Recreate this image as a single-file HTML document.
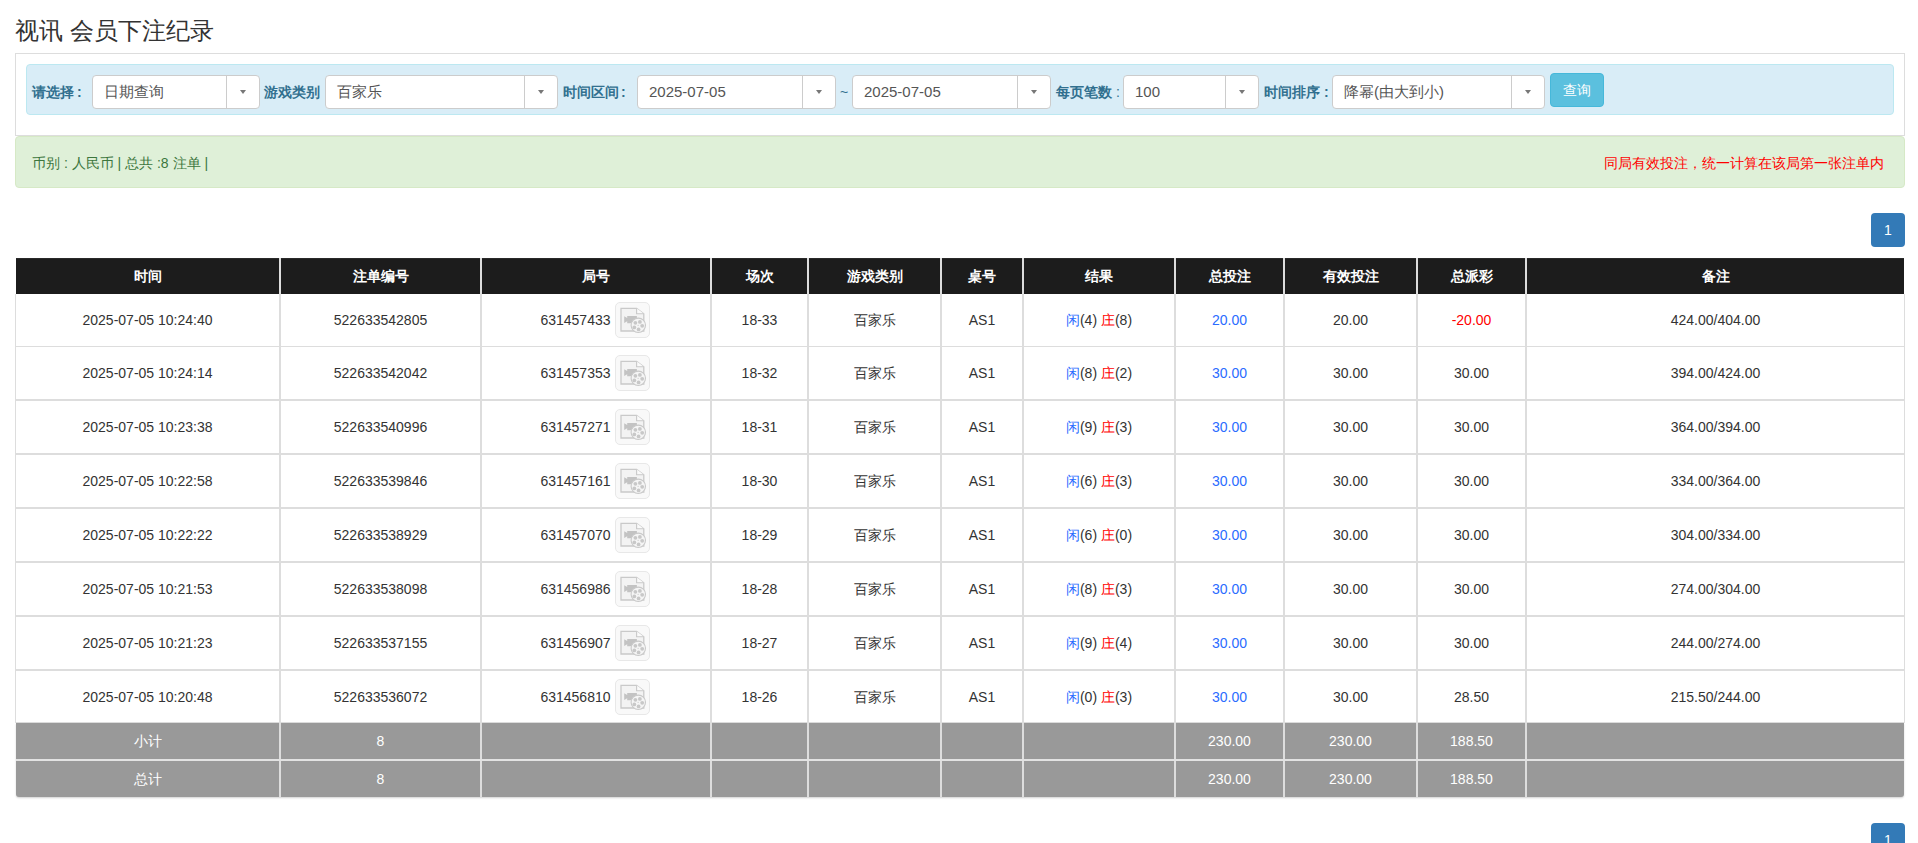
<!DOCTYPE html>
<html><head><meta charset="utf-8"><title>视讯 会员下注纪录</title>
<style>
html,body{margin:0;padding:0;background:#fff;}
body{width:1918px;height:843px;overflow:hidden;position:relative;font-family:"Liberation Sans",sans-serif;font-size:14px;color:#333;}
.a{position:absolute;white-space:nowrap;}
.title{left:15px;top:15px;font-size:24px;line-height:32px;color:#333;}
.panel{left:15px;top:53px;width:1888px;height:81px;border:1px solid #ddd;border-bottom:1px solid #ddd;}
.info{left:26px;top:64px;width:1866px;height:49px;background:#d9edf7;border:1px solid #bce8f1;border-radius:4px;}
.lbl{font-weight:bold;color:#31708f;font-size:14px;line-height:20px;top:82px;}
.sel{position:absolute;top:75px;height:32px;background:#fff;border:1px solid #ccc;border-radius:4px;}
.sel .tx{position:absolute;left:11px;top:0;line-height:32px;font-size:15px;color:#555;white-space:nowrap;}
.sel .dv{position:absolute;top:0;width:1px;height:32px;background:#ccc;}
.sel .ca{position:absolute;top:14px;width:0;height:0;border-left:3.5px solid transparent;border-right:3.5px solid transparent;border-top:4px solid #777;}
.btn{left:1550px;top:73px;width:54px;height:34px;box-sizing:border-box;border:1px solid #46b8da;background:#5bc0de;border-radius:4px;color:#fff;font-size:14px;line-height:32px;text-align:center;}
.succ{left:15px;top:136px;width:1888px;height:50px;background:#dff0d8;border:1px solid #d6e9c6;border-radius:4px;}
.gtx{left:32px;top:153px;color:#3c763d;font-size:14px;line-height:20px;}
.rtx{left:1604px;top:153px;color:#ff0000;font-size:14px;line-height:20px;}
.pg{left:1871px;width:34px;height:34px;background:#337ab7;border-radius:4px;color:#fff;font-size:14px;line-height:34px;text-align:center;}
.hd{position:absolute;background:#1c1c1c;border-top:1px solid #2a2a2a;box-sizing:border-box;}
.tb{position:absolute;box-sizing:border-box;border:1px solid #ddd;border-top:0;background:#fff;}
.hl{position:absolute;background:#ddd;}
.fbg{position:absolute;background:#999;border-radius:0 0 3px 3px;box-shadow:0 1px 2px rgba(0,0,0,.18);}
.vl{position:absolute;background:#ddd;}
.c{position:absolute;display:flex;align-items:center;justify-content:center;white-space:nowrap;font-size:14px;color:#333;}
.c.th{color:#fff;font-weight:bold;padding-top:0px;box-sizing:border-box;}
.c.ft{color:#fff;}
.jn{position:relative;top:1px;}
.c2 .ci{position:relative;left:-0.6px;}
.ci{line-height:20px;}
.bl{color:#2b6cff;}
.rd{color:#ff0000;}
.ib{display:inline-block;vertical-align:middle;width:35px;height:36px;margin-left:1px;box-sizing:border-box;border:1px solid #e8e8e8;border-radius:5px;background:#f9f9f9;position:relative;}
.ib svg{position:absolute;left:-1px;top:-1px;}
</style></head><body>
<div class="a title">视讯 会员下注纪录</div>
<div class="a panel"></div>
<div class="a info"></div>
<div class="a lbl" style="left:32px">请选择<span style="padding-left:3px">:</span></div>
<div class="sel" style="left:92px;width:166px"><span class="tx">日期查询</span><span class="dv" style="left:133px"></span><span class="ca" style="left:147px"></span></div>
<div class="a lbl" style="left:264px">游戏类别</div>
<div class="sel" style="left:325px;width:231px"><span class="tx">百家乐</span><span class="dv" style="left:198px"></span><span class="ca" style="left:212px"></span></div>
<div class="a lbl" style="left:563px">时间区间<span style="padding-left:2px">:</span></div>
<div class="sel" style="left:637px;width:197px"><span class="tx">2025-07-05</span><span class="dv" style="left:164px"></span><span class="ca" style="left:178px"></span></div>
<div class="a lbl" style="left:840px;font-weight:normal">~</div>
<div class="sel" style="left:852px;width:197px"><span class="tx">2025-07-05</span><span class="dv" style="left:164px"></span><span class="ca" style="left:178px"></span></div>
<div class="a lbl" style="left:1056px">每页笔数 <span style="font-weight:normal">:</span></div>
<div class="sel" style="left:1123px;width:134px"><span class="tx">100</span><span class="dv" style="left:101px"></span><span class="ca" style="left:115px"></span></div>
<div class="a lbl" style="left:1264px">时间排序 :</div>
<div class="sel" style="left:1332px;width:211px"><span class="tx">降幂(由大到小)</span><span class="dv" style="left:178px"></span><span class="ca" style="left:192px"></span></div>
<div class="a btn">查询</div>
<div class="a succ"></div>
<div class="a gtx">币别 : 人民币 | 总共 :8 注单 |</div>
<div class="a rtx">同局有效投注，统一计算在该局第一张注单内</div>
<div class="a pg" style="top:213px">1</div>
<div class="hd" style="left:16px;top:258px;width:1888px;height:36px"></div>
<div class="tb" style="left:15px;top:294px;width:1890px;height:429px"></div>
<div class="fbg" style="left:16px;top:723px;width:1888px;height:74px"></div>
<div class="c th" style="left:16px;top:258px;width:263px;height:36px"><span class="ci">时间</span></div>
<div class="c th" style="left:281px;top:258px;width:199px;height:36px"><span class="ci">注单编号</span></div>
<div class="c th" style="left:482px;top:258px;width:228px;height:36px"><span class="ci">局号</span></div>
<div class="c th" style="left:712px;top:258px;width:95px;height:36px"><span class="ci">场次</span></div>
<div class="c th" style="left:809px;top:258px;width:131px;height:36px"><span class="ci">游戏类别</span></div>
<div class="c th" style="left:942px;top:258px;width:80px;height:36px"><span class="ci">桌号</span></div>
<div class="c th" style="left:1024px;top:258px;width:150px;height:36px"><span class="ci">结果</span></div>
<div class="c th" style="left:1176px;top:258px;width:107px;height:36px"><span class="ci">总投注</span></div>
<div class="c th" style="left:1285px;top:258px;width:131px;height:36px"><span class="ci">有效投注</span></div>
<div class="c th" style="left:1418px;top:258px;width:107px;height:36px"><span class="ci">总派彩</span></div>
<div class="c th" style="left:1527px;top:258px;width:377px;height:36px"><span class="ci">备注</span></div>
<div class="hl" style="left:15px;top:346px;width:1890px;height:1px"></div>
<div class="hl" style="left:15px;top:399px;width:1890px;height:2px"></div>
<div class="hl" style="left:15px;top:453px;width:1890px;height:2px"></div>
<div class="hl" style="left:15px;top:507px;width:1890px;height:2px"></div>
<div class="hl" style="left:15px;top:561px;width:1890px;height:2px"></div>
<div class="hl" style="left:15px;top:615px;width:1890px;height:2px"></div>
<div class="hl" style="left:15px;top:669px;width:1890px;height:2px"></div>
<div class="vl" style="left:279px;top:258px;width:2px;height:539px"></div>
<div class="vl" style="left:480px;top:258px;width:2px;height:539px"></div>
<div class="vl" style="left:710px;top:258px;width:2px;height:539px"></div>
<div class="vl" style="left:807px;top:258px;width:2px;height:539px"></div>
<div class="vl" style="left:940px;top:258px;width:2px;height:539px"></div>
<div class="vl" style="left:1022px;top:258px;width:2px;height:539px"></div>
<div class="vl" style="left:1174px;top:258px;width:2px;height:539px"></div>
<div class="vl" style="left:1283px;top:258px;width:2px;height:539px"></div>
<div class="vl" style="left:1416px;top:258px;width:2px;height:539px"></div>
<div class="vl" style="left:1525px;top:258px;width:2px;height:539px"></div>
<div class="c " style="left:16px;top:294px;width:263px;height:52px"><span class="ci">2025-07-05 10:24:40</span></div>
<div class="c " style="left:281px;top:294px;width:199px;height:52px"><span class="ci">522633542805</span></div>
<div class="c c2" style="left:482px;top:294px;width:228px;height:52px"><span class="ci"><span class="jn">631457433</span> <span class="ib"><svg width="35" height="36" viewBox="0 0 35 36"><path d="M6 6.3H21.6L28.8 11.8V29H6Z" fill="#f3f3f3" stroke="#c9c9c9" stroke-width="1.3"/><path d="M21.6 6.3V11.8H28.8" fill="#fafafa" stroke="#c9c9c9" stroke-width="1.1"/><path d="M9.2 14.2L12.2 16V14H21.9V21.2H12.2V19.2L9.2 21Z" fill="#c3c3c3"/><circle cx="23.3" cy="23.3" r="7.2" fill="#f5f5f5" stroke="#c9c9c9" stroke-width="1.1"/><circle cx="20.4" cy="20.8" r="1.9" fill="#c8c8c8"/><circle cx="24.9" cy="19.9" r="1.9" fill="#c8c8c8"/><circle cx="27.2" cy="23.8" r="1.9" fill="#c8c8c8"/><circle cx="23.6" cy="27.4" r="1.9" fill="#c8c8c8"/><circle cx="19.3" cy="25.4" r="1.9" fill="#c8c8c8"/><circle cx="23.1" cy="23.3" r="0.6" fill="#c8c8c8"/></svg></span></span></div>
<div class="c " style="left:712px;top:294px;width:95px;height:52px"><span class="ci">18-33</span></div>
<div class="c " style="left:809px;top:294px;width:131px;height:52px"><span class="ci">百家乐</span></div>
<div class="c " style="left:942px;top:294px;width:80px;height:52px"><span class="ci">AS1</span></div>
<div class="c " style="left:1024px;top:294px;width:150px;height:52px"><span class="ci"><span class="bl">闲</span>(4) <span class="rd">庄</span>(8)</span></div>
<div class="c " style="left:1176px;top:294px;width:107px;height:52px"><span class="ci"><span class="bl">20.00</span></span></div>
<div class="c " style="left:1285px;top:294px;width:131px;height:52px"><span class="ci">20.00</span></div>
<div class="c " style="left:1418px;top:294px;width:107px;height:52px"><span class="ci"><span class="rd">-20.00</span></span></div>
<div class="c " style="left:1527px;top:294px;width:377px;height:52px"><span class="ci">424.00/404.00</span></div>
<div class="c " style="left:16px;top:347px;width:263px;height:52px"><span class="ci">2025-07-05 10:24:14</span></div>
<div class="c " style="left:281px;top:347px;width:199px;height:52px"><span class="ci">522633542042</span></div>
<div class="c c2" style="left:482px;top:347px;width:228px;height:52px"><span class="ci"><span class="jn">631457353</span> <span class="ib"><svg width="35" height="36" viewBox="0 0 35 36"><path d="M6 6.3H21.6L28.8 11.8V29H6Z" fill="#f3f3f3" stroke="#c9c9c9" stroke-width="1.3"/><path d="M21.6 6.3V11.8H28.8" fill="#fafafa" stroke="#c9c9c9" stroke-width="1.1"/><path d="M9.2 14.2L12.2 16V14H21.9V21.2H12.2V19.2L9.2 21Z" fill="#c3c3c3"/><circle cx="23.3" cy="23.3" r="7.2" fill="#f5f5f5" stroke="#c9c9c9" stroke-width="1.1"/><circle cx="20.4" cy="20.8" r="1.9" fill="#c8c8c8"/><circle cx="24.9" cy="19.9" r="1.9" fill="#c8c8c8"/><circle cx="27.2" cy="23.8" r="1.9" fill="#c8c8c8"/><circle cx="23.6" cy="27.4" r="1.9" fill="#c8c8c8"/><circle cx="19.3" cy="25.4" r="1.9" fill="#c8c8c8"/><circle cx="23.1" cy="23.3" r="0.6" fill="#c8c8c8"/></svg></span></span></div>
<div class="c " style="left:712px;top:347px;width:95px;height:52px"><span class="ci">18-32</span></div>
<div class="c " style="left:809px;top:347px;width:131px;height:52px"><span class="ci">百家乐</span></div>
<div class="c " style="left:942px;top:347px;width:80px;height:52px"><span class="ci">AS1</span></div>
<div class="c " style="left:1024px;top:347px;width:150px;height:52px"><span class="ci"><span class="bl">闲</span>(8) <span class="rd">庄</span>(2)</span></div>
<div class="c " style="left:1176px;top:347px;width:107px;height:52px"><span class="ci"><span class="bl">30.00</span></span></div>
<div class="c " style="left:1285px;top:347px;width:131px;height:52px"><span class="ci">30.00</span></div>
<div class="c " style="left:1418px;top:347px;width:107px;height:52px"><span class="ci">30.00</span></div>
<div class="c " style="left:1527px;top:347px;width:377px;height:52px"><span class="ci">394.00/424.00</span></div>
<div class="c " style="left:16px;top:401px;width:263px;height:52px"><span class="ci">2025-07-05 10:23:38</span></div>
<div class="c " style="left:281px;top:401px;width:199px;height:52px"><span class="ci">522633540996</span></div>
<div class="c c2" style="left:482px;top:401px;width:228px;height:52px"><span class="ci"><span class="jn">631457271</span> <span class="ib"><svg width="35" height="36" viewBox="0 0 35 36"><path d="M6 6.3H21.6L28.8 11.8V29H6Z" fill="#f3f3f3" stroke="#c9c9c9" stroke-width="1.3"/><path d="M21.6 6.3V11.8H28.8" fill="#fafafa" stroke="#c9c9c9" stroke-width="1.1"/><path d="M9.2 14.2L12.2 16V14H21.9V21.2H12.2V19.2L9.2 21Z" fill="#c3c3c3"/><circle cx="23.3" cy="23.3" r="7.2" fill="#f5f5f5" stroke="#c9c9c9" stroke-width="1.1"/><circle cx="20.4" cy="20.8" r="1.9" fill="#c8c8c8"/><circle cx="24.9" cy="19.9" r="1.9" fill="#c8c8c8"/><circle cx="27.2" cy="23.8" r="1.9" fill="#c8c8c8"/><circle cx="23.6" cy="27.4" r="1.9" fill="#c8c8c8"/><circle cx="19.3" cy="25.4" r="1.9" fill="#c8c8c8"/><circle cx="23.1" cy="23.3" r="0.6" fill="#c8c8c8"/></svg></span></span></div>
<div class="c " style="left:712px;top:401px;width:95px;height:52px"><span class="ci">18-31</span></div>
<div class="c " style="left:809px;top:401px;width:131px;height:52px"><span class="ci">百家乐</span></div>
<div class="c " style="left:942px;top:401px;width:80px;height:52px"><span class="ci">AS1</span></div>
<div class="c " style="left:1024px;top:401px;width:150px;height:52px"><span class="ci"><span class="bl">闲</span>(9) <span class="rd">庄</span>(3)</span></div>
<div class="c " style="left:1176px;top:401px;width:107px;height:52px"><span class="ci"><span class="bl">30.00</span></span></div>
<div class="c " style="left:1285px;top:401px;width:131px;height:52px"><span class="ci">30.00</span></div>
<div class="c " style="left:1418px;top:401px;width:107px;height:52px"><span class="ci">30.00</span></div>
<div class="c " style="left:1527px;top:401px;width:377px;height:52px"><span class="ci">364.00/394.00</span></div>
<div class="c " style="left:16px;top:455px;width:263px;height:52px"><span class="ci">2025-07-05 10:22:58</span></div>
<div class="c " style="left:281px;top:455px;width:199px;height:52px"><span class="ci">522633539846</span></div>
<div class="c c2" style="left:482px;top:455px;width:228px;height:52px"><span class="ci"><span class="jn">631457161</span> <span class="ib"><svg width="35" height="36" viewBox="0 0 35 36"><path d="M6 6.3H21.6L28.8 11.8V29H6Z" fill="#f3f3f3" stroke="#c9c9c9" stroke-width="1.3"/><path d="M21.6 6.3V11.8H28.8" fill="#fafafa" stroke="#c9c9c9" stroke-width="1.1"/><path d="M9.2 14.2L12.2 16V14H21.9V21.2H12.2V19.2L9.2 21Z" fill="#c3c3c3"/><circle cx="23.3" cy="23.3" r="7.2" fill="#f5f5f5" stroke="#c9c9c9" stroke-width="1.1"/><circle cx="20.4" cy="20.8" r="1.9" fill="#c8c8c8"/><circle cx="24.9" cy="19.9" r="1.9" fill="#c8c8c8"/><circle cx="27.2" cy="23.8" r="1.9" fill="#c8c8c8"/><circle cx="23.6" cy="27.4" r="1.9" fill="#c8c8c8"/><circle cx="19.3" cy="25.4" r="1.9" fill="#c8c8c8"/><circle cx="23.1" cy="23.3" r="0.6" fill="#c8c8c8"/></svg></span></span></div>
<div class="c " style="left:712px;top:455px;width:95px;height:52px"><span class="ci">18-30</span></div>
<div class="c " style="left:809px;top:455px;width:131px;height:52px"><span class="ci">百家乐</span></div>
<div class="c " style="left:942px;top:455px;width:80px;height:52px"><span class="ci">AS1</span></div>
<div class="c " style="left:1024px;top:455px;width:150px;height:52px"><span class="ci"><span class="bl">闲</span>(6) <span class="rd">庄</span>(3)</span></div>
<div class="c " style="left:1176px;top:455px;width:107px;height:52px"><span class="ci"><span class="bl">30.00</span></span></div>
<div class="c " style="left:1285px;top:455px;width:131px;height:52px"><span class="ci">30.00</span></div>
<div class="c " style="left:1418px;top:455px;width:107px;height:52px"><span class="ci">30.00</span></div>
<div class="c " style="left:1527px;top:455px;width:377px;height:52px"><span class="ci">334.00/364.00</span></div>
<div class="c " style="left:16px;top:509px;width:263px;height:52px"><span class="ci">2025-07-05 10:22:22</span></div>
<div class="c " style="left:281px;top:509px;width:199px;height:52px"><span class="ci">522633538929</span></div>
<div class="c c2" style="left:482px;top:509px;width:228px;height:52px"><span class="ci"><span class="jn">631457070</span> <span class="ib"><svg width="35" height="36" viewBox="0 0 35 36"><path d="M6 6.3H21.6L28.8 11.8V29H6Z" fill="#f3f3f3" stroke="#c9c9c9" stroke-width="1.3"/><path d="M21.6 6.3V11.8H28.8" fill="#fafafa" stroke="#c9c9c9" stroke-width="1.1"/><path d="M9.2 14.2L12.2 16V14H21.9V21.2H12.2V19.2L9.2 21Z" fill="#c3c3c3"/><circle cx="23.3" cy="23.3" r="7.2" fill="#f5f5f5" stroke="#c9c9c9" stroke-width="1.1"/><circle cx="20.4" cy="20.8" r="1.9" fill="#c8c8c8"/><circle cx="24.9" cy="19.9" r="1.9" fill="#c8c8c8"/><circle cx="27.2" cy="23.8" r="1.9" fill="#c8c8c8"/><circle cx="23.6" cy="27.4" r="1.9" fill="#c8c8c8"/><circle cx="19.3" cy="25.4" r="1.9" fill="#c8c8c8"/><circle cx="23.1" cy="23.3" r="0.6" fill="#c8c8c8"/></svg></span></span></div>
<div class="c " style="left:712px;top:509px;width:95px;height:52px"><span class="ci">18-29</span></div>
<div class="c " style="left:809px;top:509px;width:131px;height:52px"><span class="ci">百家乐</span></div>
<div class="c " style="left:942px;top:509px;width:80px;height:52px"><span class="ci">AS1</span></div>
<div class="c " style="left:1024px;top:509px;width:150px;height:52px"><span class="ci"><span class="bl">闲</span>(6) <span class="rd">庄</span>(0)</span></div>
<div class="c " style="left:1176px;top:509px;width:107px;height:52px"><span class="ci"><span class="bl">30.00</span></span></div>
<div class="c " style="left:1285px;top:509px;width:131px;height:52px"><span class="ci">30.00</span></div>
<div class="c " style="left:1418px;top:509px;width:107px;height:52px"><span class="ci">30.00</span></div>
<div class="c " style="left:1527px;top:509px;width:377px;height:52px"><span class="ci">304.00/334.00</span></div>
<div class="c " style="left:16px;top:563px;width:263px;height:52px"><span class="ci">2025-07-05 10:21:53</span></div>
<div class="c " style="left:281px;top:563px;width:199px;height:52px"><span class="ci">522633538098</span></div>
<div class="c c2" style="left:482px;top:563px;width:228px;height:52px"><span class="ci"><span class="jn">631456986</span> <span class="ib"><svg width="35" height="36" viewBox="0 0 35 36"><path d="M6 6.3H21.6L28.8 11.8V29H6Z" fill="#f3f3f3" stroke="#c9c9c9" stroke-width="1.3"/><path d="M21.6 6.3V11.8H28.8" fill="#fafafa" stroke="#c9c9c9" stroke-width="1.1"/><path d="M9.2 14.2L12.2 16V14H21.9V21.2H12.2V19.2L9.2 21Z" fill="#c3c3c3"/><circle cx="23.3" cy="23.3" r="7.2" fill="#f5f5f5" stroke="#c9c9c9" stroke-width="1.1"/><circle cx="20.4" cy="20.8" r="1.9" fill="#c8c8c8"/><circle cx="24.9" cy="19.9" r="1.9" fill="#c8c8c8"/><circle cx="27.2" cy="23.8" r="1.9" fill="#c8c8c8"/><circle cx="23.6" cy="27.4" r="1.9" fill="#c8c8c8"/><circle cx="19.3" cy="25.4" r="1.9" fill="#c8c8c8"/><circle cx="23.1" cy="23.3" r="0.6" fill="#c8c8c8"/></svg></span></span></div>
<div class="c " style="left:712px;top:563px;width:95px;height:52px"><span class="ci">18-28</span></div>
<div class="c " style="left:809px;top:563px;width:131px;height:52px"><span class="ci">百家乐</span></div>
<div class="c " style="left:942px;top:563px;width:80px;height:52px"><span class="ci">AS1</span></div>
<div class="c " style="left:1024px;top:563px;width:150px;height:52px"><span class="ci"><span class="bl">闲</span>(8) <span class="rd">庄</span>(3)</span></div>
<div class="c " style="left:1176px;top:563px;width:107px;height:52px"><span class="ci"><span class="bl">30.00</span></span></div>
<div class="c " style="left:1285px;top:563px;width:131px;height:52px"><span class="ci">30.00</span></div>
<div class="c " style="left:1418px;top:563px;width:107px;height:52px"><span class="ci">30.00</span></div>
<div class="c " style="left:1527px;top:563px;width:377px;height:52px"><span class="ci">274.00/304.00</span></div>
<div class="c " style="left:16px;top:617px;width:263px;height:52px"><span class="ci">2025-07-05 10:21:23</span></div>
<div class="c " style="left:281px;top:617px;width:199px;height:52px"><span class="ci">522633537155</span></div>
<div class="c c2" style="left:482px;top:617px;width:228px;height:52px"><span class="ci"><span class="jn">631456907</span> <span class="ib"><svg width="35" height="36" viewBox="0 0 35 36"><path d="M6 6.3H21.6L28.8 11.8V29H6Z" fill="#f3f3f3" stroke="#c9c9c9" stroke-width="1.3"/><path d="M21.6 6.3V11.8H28.8" fill="#fafafa" stroke="#c9c9c9" stroke-width="1.1"/><path d="M9.2 14.2L12.2 16V14H21.9V21.2H12.2V19.2L9.2 21Z" fill="#c3c3c3"/><circle cx="23.3" cy="23.3" r="7.2" fill="#f5f5f5" stroke="#c9c9c9" stroke-width="1.1"/><circle cx="20.4" cy="20.8" r="1.9" fill="#c8c8c8"/><circle cx="24.9" cy="19.9" r="1.9" fill="#c8c8c8"/><circle cx="27.2" cy="23.8" r="1.9" fill="#c8c8c8"/><circle cx="23.6" cy="27.4" r="1.9" fill="#c8c8c8"/><circle cx="19.3" cy="25.4" r="1.9" fill="#c8c8c8"/><circle cx="23.1" cy="23.3" r="0.6" fill="#c8c8c8"/></svg></span></span></div>
<div class="c " style="left:712px;top:617px;width:95px;height:52px"><span class="ci">18-27</span></div>
<div class="c " style="left:809px;top:617px;width:131px;height:52px"><span class="ci">百家乐</span></div>
<div class="c " style="left:942px;top:617px;width:80px;height:52px"><span class="ci">AS1</span></div>
<div class="c " style="left:1024px;top:617px;width:150px;height:52px"><span class="ci"><span class="bl">闲</span>(9) <span class="rd">庄</span>(4)</span></div>
<div class="c " style="left:1176px;top:617px;width:107px;height:52px"><span class="ci"><span class="bl">30.00</span></span></div>
<div class="c " style="left:1285px;top:617px;width:131px;height:52px"><span class="ci">30.00</span></div>
<div class="c " style="left:1418px;top:617px;width:107px;height:52px"><span class="ci">30.00</span></div>
<div class="c " style="left:1527px;top:617px;width:377px;height:52px"><span class="ci">244.00/274.00</span></div>
<div class="c " style="left:16px;top:671px;width:263px;height:52px"><span class="ci">2025-07-05 10:20:48</span></div>
<div class="c " style="left:281px;top:671px;width:199px;height:52px"><span class="ci">522633536072</span></div>
<div class="c c2" style="left:482px;top:671px;width:228px;height:52px"><span class="ci"><span class="jn">631456810</span> <span class="ib"><svg width="35" height="36" viewBox="0 0 35 36"><path d="M6 6.3H21.6L28.8 11.8V29H6Z" fill="#f3f3f3" stroke="#c9c9c9" stroke-width="1.3"/><path d="M21.6 6.3V11.8H28.8" fill="#fafafa" stroke="#c9c9c9" stroke-width="1.1"/><path d="M9.2 14.2L12.2 16V14H21.9V21.2H12.2V19.2L9.2 21Z" fill="#c3c3c3"/><circle cx="23.3" cy="23.3" r="7.2" fill="#f5f5f5" stroke="#c9c9c9" stroke-width="1.1"/><circle cx="20.4" cy="20.8" r="1.9" fill="#c8c8c8"/><circle cx="24.9" cy="19.9" r="1.9" fill="#c8c8c8"/><circle cx="27.2" cy="23.8" r="1.9" fill="#c8c8c8"/><circle cx="23.6" cy="27.4" r="1.9" fill="#c8c8c8"/><circle cx="19.3" cy="25.4" r="1.9" fill="#c8c8c8"/><circle cx="23.1" cy="23.3" r="0.6" fill="#c8c8c8"/></svg></span></span></div>
<div class="c " style="left:712px;top:671px;width:95px;height:52px"><span class="ci">18-26</span></div>
<div class="c " style="left:809px;top:671px;width:131px;height:52px"><span class="ci">百家乐</span></div>
<div class="c " style="left:942px;top:671px;width:80px;height:52px"><span class="ci">AS1</span></div>
<div class="c " style="left:1024px;top:671px;width:150px;height:52px"><span class="ci"><span class="bl">闲</span>(0) <span class="rd">庄</span>(3)</span></div>
<div class="c " style="left:1176px;top:671px;width:107px;height:52px"><span class="ci"><span class="bl">30.00</span></span></div>
<div class="c " style="left:1285px;top:671px;width:131px;height:52px"><span class="ci">30.00</span></div>
<div class="c " style="left:1418px;top:671px;width:107px;height:52px"><span class="ci">28.50</span></div>
<div class="c " style="left:1527px;top:671px;width:377px;height:52px"><span class="ci">215.50/244.00</span></div>
<div class="hl" style="left:16px;top:759px;width:1888px;height:2px;background:#e2e2e2"></div>
<div class="c ft" style="left:16px;top:723px;width:263px;height:36px"><span class="ci">小计</span></div>
<div class="c ft" style="left:281px;top:723px;width:199px;height:36px"><span class="ci">8</span></div>
<div class="c ft" style="left:482px;top:723px;width:228px;height:36px"><span class="ci"></span></div>
<div class="c ft" style="left:712px;top:723px;width:95px;height:36px"><span class="ci"></span></div>
<div class="c ft" style="left:809px;top:723px;width:131px;height:36px"><span class="ci"></span></div>
<div class="c ft" style="left:942px;top:723px;width:80px;height:36px"><span class="ci"></span></div>
<div class="c ft" style="left:1024px;top:723px;width:150px;height:36px"><span class="ci"></span></div>
<div class="c ft" style="left:1176px;top:723px;width:107px;height:36px"><span class="ci">230.00</span></div>
<div class="c ft" style="left:1285px;top:723px;width:131px;height:36px"><span class="ci">230.00</span></div>
<div class="c ft" style="left:1418px;top:723px;width:107px;height:36px"><span class="ci">188.50</span></div>
<div class="c ft" style="left:1527px;top:723px;width:377px;height:36px"><span class="ci"></span></div>
<div class="c ft" style="left:16px;top:761px;width:263px;height:36px"><span class="ci">总计</span></div>
<div class="c ft" style="left:281px;top:761px;width:199px;height:36px"><span class="ci">8</span></div>
<div class="c ft" style="left:482px;top:761px;width:228px;height:36px"><span class="ci"></span></div>
<div class="c ft" style="left:712px;top:761px;width:95px;height:36px"><span class="ci"></span></div>
<div class="c ft" style="left:809px;top:761px;width:131px;height:36px"><span class="ci"></span></div>
<div class="c ft" style="left:942px;top:761px;width:80px;height:36px"><span class="ci"></span></div>
<div class="c ft" style="left:1024px;top:761px;width:150px;height:36px"><span class="ci"></span></div>
<div class="c ft" style="left:1176px;top:761px;width:107px;height:36px"><span class="ci">230.00</span></div>
<div class="c ft" style="left:1285px;top:761px;width:131px;height:36px"><span class="ci">230.00</span></div>
<div class="c ft" style="left:1418px;top:761px;width:107px;height:36px"><span class="ci">188.50</span></div>
<div class="c ft" style="left:1527px;top:761px;width:377px;height:36px"><span class="ci"></span></div>
<div class="a pg" style="top:823px">1</div>
</body></html>
